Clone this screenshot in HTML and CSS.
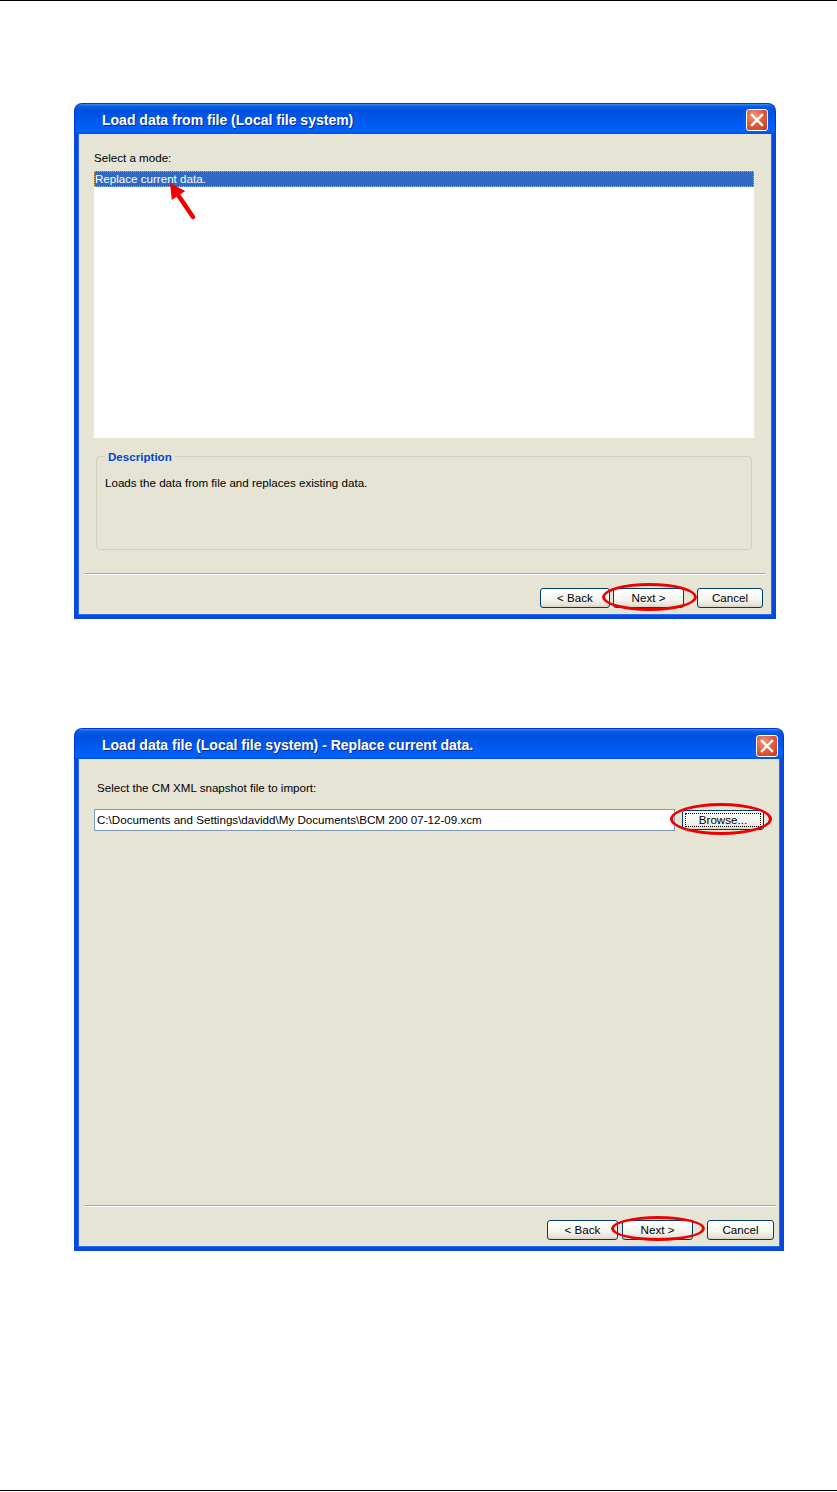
FILE: index.html
```html
<!DOCTYPE html>
<html>
<head>
<meta charset="utf-8">
<link rel="stylesheet" href="styles.css">
</head>
<body>
<div class="page">
  <div class="dialog d1">
    <div class="titlebar">
      <span class="title">Load data from file (Local file system)</span>
      <span class="close"><svg width="14" height="14" viewBox="0 0 14 14"><path d="M2 2 L12 12 M12 2 L2 12" stroke="#fff" stroke-width="2.4" stroke-linecap="square"/></svg></span>
    </div>
    <div class="frame">
      <div class="main">
        <div class="label">Select a mode:</div>
        <div class="listbox"><div class="row selected">Replace current data.</div></div>
        <fieldset class="group">
          <legend>Description</legend>
          <p class="desc">Loads the data from file and replaces existing data.</p>
        </fieldset>
      </div>
      <div class="footer">
        <div class="sep"></div>
        <div class="buttons">
          <button class="btn back">&lt; Back</button>
          <button class="btn next">Next &gt;</button>
          <button class="btn cancel">Cancel</button>
        </div>
      </div>
    </div>
    <svg class="arrow" width="36" height="44" viewBox="0 0 36 44"><line x1="14.4" y1="16.4" x2="29" y2="38" stroke="#f00000" stroke-width="4.5" stroke-linecap="round"/><polygon points="6,4 7.8,21 21.2,12" fill="#f00000"/></svg>
    <span class="mark m1"></span>
  </div>

  <div class="dialog d2">
    <div class="titlebar">
      <span class="title">Load data file (Local file system) - Replace current data.</span>
      <span class="close"><svg width="14" height="14" viewBox="0 0 14 14"><path d="M2 2 L12 12 M12 2 L2 12" stroke="#fff" stroke-width="2.4" stroke-linecap="square"/></svg></span>
    </div>
    <div class="frame">
      <div class="main">
        <div class="label">Select the CM XML snapshot file to import:</div>
        <div class="filerow">
          <div class="field">C:\Documents and Settings\davidd\My Documents\BCM 200 07-12-09.xcm</div>
          <button class="btn browse">Browse...</button>
        </div>
      </div>
      <div class="footer">
        <div class="sep"></div>
        <div class="buttons">
          <button class="btn back">&lt; Back</button>
          <button class="btn next">Next &gt;</button>
          <button class="btn cancel">Cancel</button>
        </div>
      </div>
    </div>
    <span class="mark m2"></span>
    <span class="mark m3"></span>
  </div>
</div>
</body>
</html>
```
FILE: styles.css
```css
* { box-sizing: border-box; }
html, body { margin: 0; padding: 0; background: #fff; }
body { font-family: "Liberation Sans", Arial, sans-serif; font-size: 11.6px; color: #000; }

.page {
  width: 837px;
  height: 1491px;
  border-top: 1px solid #000;
  border-bottom: 1px solid #000;
  display: flex;
  flex-direction: column;
}

.dialog {
  position: relative;
  margin-left: 74px;
  display: flex;
  flex-direction: column;
}
.d1 { margin-top: 102px; width: 702px; height: 516px; }
.d2 { margin-top: 109px; width: 710px; height: 523px; }

.titlebar {
  height: 31px;
  flex: none;
  border-radius: 8px 8px 0 0;
  background: linear-gradient(to bottom, #3d8ff5 0px, #0a5fee 2px, #0052dc 6px, #0054e3 12px, #005cf4 20px, #0061fb 27px, #004bd6 31px);
  display: flex;
  justify-content: space-between;
  align-items: flex-start;
  padding-left: 27px;
  border: 1px solid #0039c8;
  border-bottom: none;
}
.title {
  color: #fff;
  font-weight: bold;
  font-size: 14px;
  line-height: 16px;
  margin-top: 8px;
  text-shadow: 1px 1px 0 #0a2a8a;
  white-space: nowrap;
}
.close {
  width: 22px;
  height: 22px;
  border: 1px solid #fff;
  border-radius: 3px;
  background: radial-gradient(circle at 35% 30%, #f09a7c 0%, #e0603e 45%, #c4361a 100%);
  display: flex;
  align-items: center;
  justify-content: center;
}
.d1 .close { margin-top: 5px; margin-right: 7px; }
.d2 .close { margin-top: 6px; margin-right: 5px; }

.frame {
  flex: 1;
  background: #e5e4d5;
  border: 4px solid #0848dc;
  border-top: none;
  box-shadow: inset 1px 0 0 #2a6cf4, inset -1px 0 0 #2a6cf4, inset 0 -1px 0 #2a6cf4;
  display: flex;
  flex-direction: column;
}

.main { display: flex; flex-direction: column; }
.d1 .main { padding: 17px 18px 0 16px; }
.d2 .main { padding: 22px 16px 0 16px; }

.label { line-height: 13px; height: 13px; white-space: nowrap; }
.d1 .label { margin-bottom: 7px; }
.d2 .label { margin-left: 3px; margin-bottom: 15px; }

.listbox { height: 267px; background: #fff; }
.row { height: 16px; line-height: 16px; padding-left: 1px; }
.row.selected {
  background: #316ac5;
  color: #fff;
  outline: 1px dotted #d8a85a;
  outline-offset: -1px;
}

.group {
  margin: 12px 2px 0 2px;
  height: 100px;
  border: 1px solid #d0d0bf;
  border-radius: 4px;
  padding: 13px 8px 0 8px;
  min-width: 0;
}
.group legend {
  padding: 0 3px;
  color: #0046d5;
  font-weight: bold;
  line-height: 13px;
}
.desc { margin: 0; line-height: 13px; }

.filerow { display: flex; align-items: center; gap: 7px; }
.field {
  width: 581px;
  height: 22px;
  background: #fff;
  border: 1px solid #7f9db9;
  line-height: 20px;
  padding-left: 2px;
  white-space: nowrap;
  overflow: hidden;
}

.footer { margin-top: auto; display: flex; flex-direction: column; }
.d1 .footer { padding: 0 7px 7px 6px; }
.d2 .footer { padding: 0 4px 7px 6px; }
.sep { height: 2px; border-top: 1px solid #aca899; border-bottom: 1px solid #fff; margin-bottom: 13px; }
.buttons { display: flex; justify-content: flex-end; }

.btn {
  font-family: "Liberation Sans", Arial, sans-serif;
  font-size: 11.6px;
  color: #000;
  height: 20px;
  padding: 0;
  border: 1px solid #003c74;
  border-radius: 3px;
  background: linear-gradient(to bottom, #ffffff 0%, #f4f4ef 60%, #e4e1d6 90%, #d6d0c5 100%);
  text-align: center;
  line-height: 18px;
}
.d1 .back { width: 70px; }
.d1 .next { width: 71px; margin-left: 3px; }
.d1 .cancel { width: 66px; margin-left: 13px; margin-right: 2px; }
.d2 .back { width: 71px; }
.d2 .next { width: 71px; margin-left: 4px; }
.d2 .cancel { width: 67px; margin-left: 14px; margin-right: 2px; }

.browse {
  width: 82px;
  outline: 1px dotted #000;
  outline-offset: -4px;
}

.arrow { position: absolute; left: 90px; top: 76px; }

.mark {
  position: absolute;
  border: 3px solid #ee0000;
  border-radius: 50%;
}
.m1 { left: 528px; top: 480px; width: 95px; height: 28px; }
.m2 { left: 596px; top: 75px; width: 102px; height: 32px; }
.m3 { left: 537px; top: 488px; width: 94px; height: 25px; }
```
